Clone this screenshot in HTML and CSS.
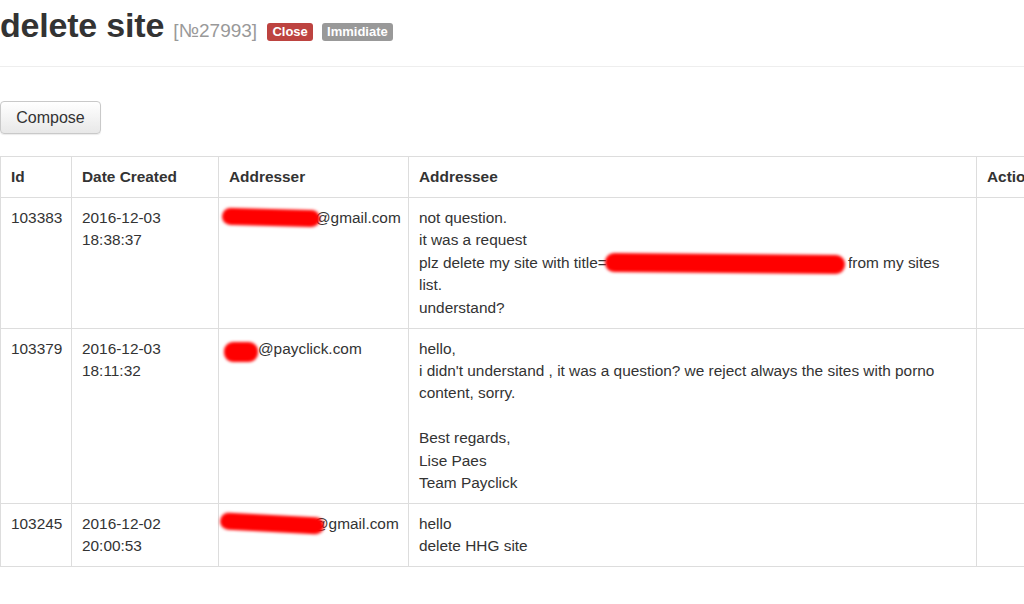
FILE: index.html
```html
<!DOCTYPE html>
<html lang="en">
<head>
    <meta charset="UTF-8">
    <meta name="viewport" content="width=device-width, initial-scale=1.0">
    <title>delete site</title>
    <link rel="stylesheet" href="styles.css">
</head>
<body>
    <div class="page">
        <div class="page-header">
            <h1>delete site <small>[№27993]</small> <span class="label label-danger">Close</span> <span class="label label-default">Immidiate</span></h1>
        </div>

        <button class="btn" type="button">Compose</button>

        <table class="messages">
            <colgroup>
                <col style="width: 71px">
                <col style="width: 147px">
                <col style="width: 190px">
                <col style="width: 568px">
                <col>
            </colgroup>
            <thead>
                <tr>
                    <th>Id</th>
                    <th>Date Created</th>
                    <th>Addresser</th>
                    <th>Addressee</th>
                    <th>Actions</th>
                </tr>
            </thead>
            <tbody>
                <tr>
                    <td>103383</td>
                    <td>2016-12-03<br>18:38:37</td>
                    <td><span class="scribble s-long"></span>@gmail.com</td>
                    <td>not question.<br>it was a request<br>plz delete my site with title=<span class="scribble s-title"></span> from my sites<br>list.<br>understand?</td>
                    <td></td>
                </tr>
                <tr>
                    <td>103379</td>
                    <td>2016-12-03<br>18:11:32</td>
                    <td><span class="scribble s-short"></span>@payclick.com</td>
                    <td>hello,<br>i didn't understand , it was a question? we reject always the sites with porno<br>content, sorry.<br><br>Best regards,<br>Lise Paes<br>Team Payclick</td>
                    <td></td>
                </tr>
                <tr>
                    <td>103245</td>
                    <td>2016-12-02<br>20:00:53</td>
                    <td><span class="scribble s-long2"></span>@gmail.com</td>
                    <td>hello<br>delete HHG site</td>
                    <td></td>
                </tr>
            </tbody>
        </table>
    </div>
</body>
</html>
```

FILE: styles.css
```css
* {
    margin: 0;
    padding: 0;
    box-sizing: border-box;
}
body {
    font-family: "Liberation Sans", Arial, Helvetica, sans-serif;
    font-size: 15.4px;
    line-height: 22.4px;
    color: #333;
    background: #fff;
    overflow: hidden;
}
.page {
    width: 1100px;
}
.page-header {
    height: 67px;
    border-bottom: 1px solid #eee;
}
h1 {
    font-size: 34px;
    line-height: 50px;
    font-weight: bold;
    color: #333;
    letter-spacing: -0.2px;
}
h1 small {
    font-size: 19px;
    font-weight: normal;
    color: #999;
    letter-spacing: 0;
    margin-left: 0;
}
.label {
    display: inline-block;
    position: relative;
    top: 4px;
    padding: 0 5px;
    font-size: 13px;
    line-height: 18px;
    font-weight: bold;
    color: #fff;
    border-radius: 3px;
    letter-spacing: 0;
    vertical-align: middle;
}
.label-danger {
    background-color: #bd4340;
    margin-left: 1px;
}
.label-default {
    background-color: #999;
}
.btn {
    display: block;
    margin-top: 34px;
    width: 101px;
    height: 33px;
    font-family: "Liberation Sans", Arial, Helvetica, sans-serif;
    font-size: 16px;
    color: #333;
    border: 1px solid #c9c9c9;
    border-radius: 4px;
    background: linear-gradient(#fff, #e8e8e8);
    box-shadow: 0 1px 1px rgba(0, 0, 0, 0.08);
}
.messages {
    margin-top: 22px;
    width: 1100px;
    table-layout: fixed;
    border-collapse: collapse;
    border: 1px solid #ddd;
}
.messages th,
.messages td {
    border: 1px solid #ddd;
    padding: 9px 10px 8.6px;
    text-align: left;
    vertical-align: top;
    white-space: nowrap;
}
.messages th {
    font-weight: bold;
}
.scribble {
    display: inline-block;
    height: 17px;
    background: #f00;
    border-radius: 9px;
    filter: blur(1.5px);
    vertical-align: -3px;
}
.s-long {
    width: 98px;
    margin-left: -7px;
    margin-right: -5px;
    transform: rotate(1.5deg);
}
.s-short {
    width: 34px;
    height: 20px;
    margin-left: -5px;
    vertical-align: -8px;
}
.s-long2 {
    width: 104px;
    margin-left: -9px;
    margin-right: -11px;
    transform: rotate(3deg);
}
.s-title {
    width: 240px;
    height: 19px;
    margin-left: -2px;
    margin-right: -1px;
    vertical-align: -5px;
    transform: rotate(0.5deg);
}
```
